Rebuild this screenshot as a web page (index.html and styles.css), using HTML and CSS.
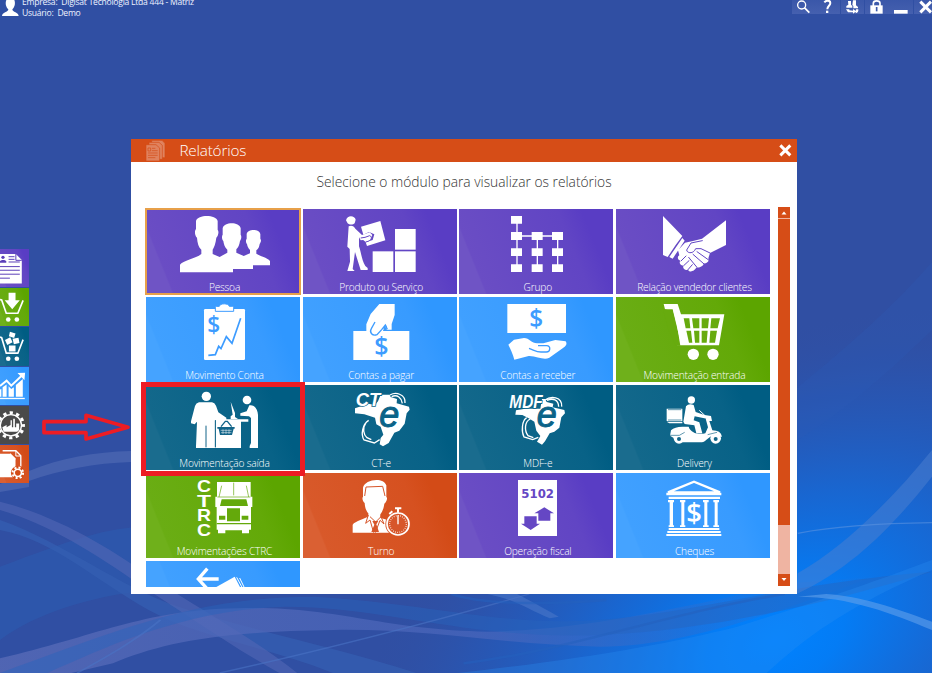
FILE: index.html
```html
<!DOCTYPE html>
<html lang="pt-BR">
<head>
<meta charset="utf-8">
<title>Relatórios</title>
<link rel="stylesheet" href="styles.css">
</head>
<body>
<svg class="wallpaper" viewBox="0 0 932 673" preserveAspectRatio="none">
  <defs>
    <radialGradient id="glow" gradientUnits="userSpaceOnUse" cx="0" cy="0" r="1" gradientTransform="translate(775 640) rotate(-28) scale(460 290)">
      <stop offset="0" stop-color="#0082ff"/><stop offset=".16" stop-color="#047cf5"/><stop offset=".45" stop-color="#156ad8" stop-opacity=".85"/><stop offset=".75" stop-color="#235bbd" stop-opacity=".5"/><stop offset="1" stop-color="#304fa3" stop-opacity="0"/>
    </radialGradient>
    <linearGradient id="fadeR" x1="0" x2="1"><stop offset="0" stop-color="#5a6cb8" stop-opacity=".75"/><stop offset=".55" stop-color="#4a66bb" stop-opacity=".7"/><stop offset="1" stop-color="#1a74df" stop-opacity=".2"/></linearGradient>
  </defs>
  <rect width="932" height="673" fill="#304fa3"/>
  <rect width="932" height="673" fill="url(#glow)"/>
  <path d="M29 471C60 458 95 452 131 451V462C95 463 60 470 29 481V487L0 492V484Z" fill="#4561ae"/>
  <path d="M797 388C850 345 900 300 932 262V330C885 375 840 415 797 440Z" fill="#2b5cb8" opacity=".25"/>
  <g transform="translate(0 480) scale(.5944 .3333)">
    <path d="M0 260C120 180 180 140 250 140V330C150 350 60 400 0 480Z" fill="#2b5cb0" opacity=".6"/>
    <path d="M0 120C110 190 200 320 300 380C420 450 560 500 700 579H560C450 500 330 470 250 390C160 300 90 180 0 150Z" fill="#3560b2" opacity=".7"/>
    <path d="M0 65C100 110 190 210 260 300C340 390 430 480 500 579H470C390 500 320 410 240 320C160 220 80 130 0 90Z" fill="#5066b3" opacity=".65"/>
    <path d="M0 535C160 470 240 390 400 385C560 375 640 450 820 455C980 450 1130 390 1330 310L1470 290C1330 380 1160 500 1010 500C850 495 720 445 560 450C360 455 270 490 190 550L120 579H0Z" fill="url(#fadeR)"/>
    <path d="M0 579C200 450 330 350 530 350C730 370 860 450 1040 415C1200 385 1330 310 1568 275C1390 370 1200 450 1010 465C790 480 650 380 480 380C310 390 180 500 80 579Z" fill="#2863bd" opacity=".45"/>
    <path d="M1340 342C1440 260 1510 120 1568 -10V-90C1500 60 1420 200 1342 280Z" fill="#4d7fd0" opacity=".5"/>
    <path d="M1290 579C1340 500 1400 400 1568 270V240C1480 300 1350 380 1240 440C1130 490 970 540 770 579Z" fill="#2c8df2" opacity=".3"/>
    <path d="M1342 350C1430 350 1500 400 1568 450V425C1500 380 1450 350 1390 342Z" fill="#60a0eb" opacity=".6"/>
    <path d="M1342 160C1400 140 1480 130 1568 128" fill="none" stroke="#5b93df" stroke-width="4" opacity=".6"/>
    <path d="M820 342C870 360 890 390 925 415L940 410C910 380 890 360 870 342Z" fill="#4a76c8" opacity=".6"/>
    <path d="M370 579C520 520 720 430 890 342M130 579C180 530 230 480 270 420" fill="none" stroke="#4973c4" stroke-width="4" opacity=".6"/>
    <path d="M780 550C960 510 1120 400 1320 342M760 342C820 380 960 370 1020 360" fill="none" stroke="#2460bd" stroke-width="7" opacity=".55"/>
  </g>
</svg>

<header class="topbar">
  <div class="account">
    <svg class="avatar" viewBox="0 0 60 50"><path fill="#fff" d="M19 0H43C47 10 44 22 37 28C37 36 56 38 56 48H6C6 38 25 36 25 28C18 22 15 10 19 0Z"/></svg>
    <div class="who"><p>Empresa:&nbsp; Digisat Tecnologia Ltda 444 - Matriz</p><p>Usuário:&nbsp; Demo</p></div>
  </div>
  <nav class="tools">
    <svg viewBox="36 0 71 42"><circle cx="65" cy="15" r="12" fill="none" stroke="#fff" stroke-width="4"/><path d="M73 23L88 38" stroke="#fff" stroke-width="5"/></svg>
    <svg viewBox="109 0 71 42"><path d="M134 7C140 0 152 0 152 9C152 17 143 18 143 28" fill="none" stroke="#fff" stroke-width="6"/><rect x="139" y="32" width="7" height="7" fill="#fff"/></svg>
    <svg viewBox="182 0 71 42"><path fill="#fff" d="M203 3H212V14L216 18V23H198V18L204 14ZM218 1H227V16L233 21V25H219V18L216 15ZM197 28H207V31L218 32V27L228 34L218 41V37H203ZM227 28H234C235 35 232 39 226 40Z"/></svg>
    <svg viewBox="255 0 71 42"><path d="M280 18V10C280 0 300 0 300 10V18" fill="none" stroke="#fff" stroke-width="5"/><path fill="#fff" d="M271 16H308V41H271Z"/><path d="M290 21V34" stroke="#3c58a9" stroke-width="5"/></svg>
    <svg viewBox="328 0 71 42"><rect x="343" y="30" width="41" height="11" fill="#fff"/></svg>
    <svg viewBox="401 0 55 42"><path d="M420 5L452 37M452 5L420 37" stroke="#fff" stroke-width="9"/></svg>
  </nav>
</header>

<aside class="dock">
  <a class="violet"><svg viewBox="0 27 89 115"><path fill="#fff" d="M0 42H48L66 60V131H0Z"/><path d="M48 42V61H66" fill="none" stroke="#5b3fb8" stroke-width="3"/><circle cx="9" cy="52" r="5" fill="#5b3fb8"/><path fill="#5b3fb8" d="M0 68V63L6 60H13L19 63V68Z"/><path d="M26 50H44M26 58H44M26 66H60M0 80H60M0 91H60M0 103H60M0 115H30" stroke="#5b3fb8" stroke-width="3"/></svg></a>
  <a class="green"><svg viewBox="0 145 89 115"><path d="M0 180L5 181L19 221H54L70 182" fill="none" stroke="#fff" stroke-width="5"/><path fill="#fff" d="M26 159H47V182H60L37 209L14 182H26Z"/><circle cx="25" cy="240" r="7" fill="#fff"/><circle cx="51" cy="240" r="7" fill="#fff"/></svg></a>
  <a class="teal"><svg viewBox="0 262 89 115"><path d="M0 292L5 294L19 341H54L70 300" fill="none" stroke="#fff" stroke-width="5"/><path fill="#fff" d="M30 276L47 281L43 295L27 290ZM15 301L31 293L38 308L22 316ZM38 297L56 294L59 310L42 314ZM27 318H47V336H27Z"/><circle cx="25" cy="358" r="7" fill="#fff"/><circle cx="51" cy="358" r="7" fill="#fff"/></svg></a>
  <a class="blue"><svg viewBox="0 380 89 115"><path d="M0 437L20 421L34 436L68 404" fill="none" stroke="#fff" stroke-width="6"/><path fill="#fff" d="M53 398L76 397L74 420ZM0 448L4 446V470H0ZM8 441L20 433V470H8ZM26 438L34 446L42 441V470H26ZM48 434L69 416V470H48Z"/><path d="M0 475H75" stroke="#fff" stroke-width="4"/></svg></a>
  <a class="gray"><svg viewBox="0 497 89 115"><circle cx="33" cy="555" r="32" fill="none" stroke="#fff" stroke-width="4"/><circle cx="33" cy="555" r="38" fill="none" stroke="#fff" stroke-width="9" stroke-dasharray="10 9.9" stroke-dashoffset="5"/><path fill="#fff" d="M7 561L20 554V561L32 554V540H36V561H40V535H45V561H49V550H58V569L52 575H11Z"/></svg></a>
  <a class="orange"><svg viewBox="0 615 89 115"><path fill="#fff" d="M0 641H33L47 655V712H0Z"/><path d="M8 632H48L63 647V680" fill="none" stroke="#fff" stroke-width="4"/><path d="M32 641V657H47M48 632V648H63" fill="none" stroke="#fff" stroke-width="3"/><circle cx="54" cy="699" r="21" fill="#d34b15"/><circle cx="54" cy="699" r="11" fill="none" stroke="#fff" stroke-width="5"/><circle cx="54" cy="699" r="16" fill="none" stroke="#fff" stroke-width="6" stroke-dasharray="6.3 6.27"/></svg></a>
</aside>

<svg class="arrow" viewBox="120 510 275 100"><path d="M132 545H258V526L384 562L258 597V578H132Z" fill="none" stroke="#ed1c24" stroke-width="11" stroke-linejoin="round"/></svg>

<main class="dialog">
  <div class="titlebar">
    <svg class="report-icon" viewBox="45 10 62 70"><g fill="#e0825e" stroke="#d34b15" stroke-width="2"><path d="M65 14H96L105 23V66H65Z"/><path d="M57 20H87L97 29V71H57Z"/><path d="M48 27H78L89 37V76H48Z"/></g><path d="M54 37H62V46H54ZM66 38H76M66 45H83M54 52H83M54 59H83M54 66H76" fill="none" stroke="#d34b15" stroke-width="2"/></svg>
    <h1>Relatórios</h1>
    <svg class="close" viewBox="970 24 44 44"><path d="M977 31L1007 61M1007 31L977 61" stroke="#fff" stroke-width="9"/></svg>
  </div>
  <h2>Selecione o módulo para visualizar os relatórios</h2>
  <div class="content">
    <div class="grid">
      <div class="tile violet focused"><svg viewBox="48 222 462 210"><path fill="#fff" d="M198 258C203 238 258 238 263 258V284C268 290 264 304 259 308C257 325 252 338 248 344V357L269 366L292 353V344C284 338 281 325 280 318C275 313 275 303 278 299V280C282 260 328 260 332 280V299C336 305 333 314 330 318C328 330 325 337 319 343V353L341 363L360 355V345C354 340 352 332 351 327C347 323 347 314 350 311V297C353 281 388 281 391 297V311C395 316 392 323 389 327C387 338 385 341 379 346V356C398 367 417 370 420 379V391H369V402H309V412H150V389C158 377 197 371 214 357V344C206 337 202 324 201 308C194 302 193 288 198 282Z"/></svg><span>Pessoa</span></div>
      <div class="tile violet"><svg viewBox="519 222 462 210"><g fill="#fff"><path d="M648 256C652 238 675 242 677 254L674 265C668 271 654 269 652 263ZM656 274C665 270 672 274 676 281L696 300L719 292L727 300L721 313L692 316L687 307V334C693 351 695 375 706 393L713 399V405H692L675 351L668 402L674 408H652L660 380L659 342L652 335Z"/><path d="M693 275L751 258L766 316L711 333L707 322L728 315L733 298L717 291L700 299Z"/><rect x="795" y="282" width="62" height="62"/><rect x="728" y="349" width="62" height="62"/><rect x="795" y="349" width="62" height="62"/></g><path d="M692 309L705 307L719 302C729 306 724 318 707 321" fill="#fff" stroke="#6547c4" stroke-width="3"/></svg><span>Produto ou Serviço</span></div>
      <div class="tile violet"><svg viewBox="15 222 462 210"><path d="M189 255V400M189 303H311V400M250 303V400" fill="none" stroke="#fff" stroke-width="4"/><path fill="#fff" d="M171 243h33v23h-33zM171 291h33v24h-33zM171 340h33v23h-33zM171 388h33v23h-33zM233 291h33v24h-33zM233 340h33v23h-33zM233 388h33v23h-33zM294 291h33v24h-33zM294 340h33v23h-33zM294 388h33v23h-33z"/></svg><span>Grupo</span></div>
      <div class="tile violet"><svg viewBox="485 222 462 210"><path fill="#fff" d="M626 243L684 303L664 330L640 366L626 360ZM684 309L691 317L655 371L645 366ZM815 256V330L767 354L762 370C767 379 755 387 748 385C748 394 733 400 727 397C718 412 704 412 701 404C692 408 684 399 687 392C676 391 674 382 678 377C668 374 669 364 675 361L671 346L692 323L719 317L743 311Z"/><path d="M767 354L740 341H724C717 358 698 355 697 345L710 324L744 317M728 350L763 375M716 358L748 386M703 367L727 396M680 378L695 363M688 392L704 377M701 404L714 389" fill="none" stroke="#6044c4" stroke-width="3" stroke-linecap="round" stroke-linejoin="round"/></svg><span>Relação vendedor clientes</span></div>

      <div class="tile blue"><svg viewBox="18 6 462 210"><rect x="192" y="42" width="123" height="153" rx="4" fill="#fff"/><path d="M226 49V37Q226 33 238 34C239 24 266 24 268 34Q280 32 281 37V49Z" fill="#fff" stroke="#3d9cff" stroke-width="3"/><text x="202" y="113" class="dollar" font-size="68" fill="#3d9cff">$</text><path d="M205 181L226 179L236 154L243 161L259 125L276 145L302 70" fill="none" stroke="#3d9cff" stroke-width="5"/></svg><span>Movimento Conta</span></div>
      <div class="tile blue"><svg viewBox="489 6 462 210"><path fill="#fff" d="M718 27H764V60L755 87V104H740V91L729 107L717 120C706 127 692 121 693 109H679V88L692 57Z"/><rect x="640" y="108" width="168" height="87" fill="#fff"/><path d="M694 101L705 81M694 101C687 113 697 124 711 119L725 104L736 90L742 103M733 95V107" fill="none" stroke="#3d9cff" stroke-width="4"/><text x="703" y="181" class="dollar" font-size="75" fill="#3d9cff">$</text></svg><span>Contas a pagar</span></div>
      <div class="tile blue"><svg viewBox="15 6 462 210"><rect x="160" y="27" width="176" height="87" fill="#fff"/><text x="226" y="95" class="dollar" font-size="73" fill="#3d9cff">$</text><path fill="#fff" d="M163 149L180 134L210 129C226 129 233 145 249 145H268L304 135L335 139Q343 150 326 160L286 188C269 198 249 182 224 183L181 194C177 179 169 160 163 149Z"/><path d="M225 160C240 165 246 171 261 171H277C290 171 291 153 278 152L252 152" fill="none" stroke="#3d9cff" stroke-width="4"/></svg><span>Contas a receber</span></div>
      <div class="tile green"><svg viewBox="485 6 462 210"><path fill="#fff" d="M628 27H670L680 58H810L794 151H668L640 45L632 43Z"/><path fill="#67ab0e" d="M688 70H705L708 100H694ZM713 70H735V100H717ZM742 70H764L761 100H742ZM771 70H797L790 100H768ZM696 107H710L714 143H704ZM719 107H735V143H722ZM742 107H760L757 143H742ZM768 107H788L782 143H765Z"/><path fill="#67ab0e" d="M626 43H656L668 90L678 152H664L640 100Z"/><path d="M660 40L686 147" stroke="#fff" stroke-width="11"/><circle cx="717" cy="178" r="17" fill="#fff"/><circle cx="776" cy="178" r="17" fill="#fff"/></svg><span>Movimentação entrada</span></div>

      <div class="tile teal marked"><svg viewBox="48 21 462 210"><g fill="#fff"><circle cx="229" cy="55" r="14"/><circle cx="351" cy="66" r="13"/><path d="M207 73H246Q254 74 258 83L265 103L289 119V126H255V207L260 210H198V204L201 131L194 139L183 136V130L195 84Q198 75 207 73ZM257 124H355V131H333V210H257ZM302 71L315 105V117L324 123H302V115L308 110ZM331 113V106L350 100L358 82C372 79 383 92 384 111V210H359V204L363 195V120L357 115Z"/></g><path d="M228 143V208M256 127V208" stroke="#136589" stroke-width="3"/><path d="M262 147H314V152H311L306 171H270L266 152H262Z" fill="#136589"/><path d="M273 146L286 130H292L305 146" fill="none" stroke="#136589" stroke-width="4"/><path d="M272 157H305M273 164H304M279 154V168M288 154V168M297 154V168" fill="none" stroke="#fff" stroke-width="1.5"/></svg><span>Movimentação saída</span></div>
      <div class="tile teal"><svg viewBox="519 21 462 210"><path fill="#fff" d="M752 50H779L782 57L801 63L800 76L837 86L839 95L830 106L824 137L808 158L793 164L776 195L759 205L749 199L752 180L760 170L752 146L739 139L735 119L703 109L675 106V91L693 85L701 74L734 81L744 70Z"/><path d="M716 127C697 139 692 170 702 186L733 195L749 185M707 136C697 149 700 170 711 179L724 185M780 51C799 40 827 50 825 75M785 56C802 48 815 60 817 76" fill="none" stroke="#fff" stroke-width="4"/><text x="677" y="85" class="brand" font-size="55">CT</text><text x="748" y="147" class="letter-e" font-size="108">e</text></svg><span>CT-e</span></div>
      <div class="tile teal"><svg viewBox="15 9 462 210"><path fill="#fff" d="M264 51H273L278 60L298 65L296 76L331 84L333 94L322 106L316 137L301 149L287 154L273 178L264 188L249 179L259 162L247 146L241 119L224 109L205 99L184 98L186 85L214 80H259Z"/><path d="M218 107C203 116 202 149 210 165L236 173L253 166M229 111C211 119 211 146 222 161L238 167M273 54C290 42 325 43 323 74M279 55C297 48 313 52 314 74" fill="none" stroke="#fff" stroke-width="4"/><text x="166" y="77" class="brand" font-size="53" textLength="100" lengthAdjust="spacingAndGlyphs">MDF</text><text x="248" y="136" class="letter-e" font-size="108">e</text></svg><span>MDF-e</span></div>
      <div class="tile teal"><svg viewBox="485 9 462 210"><g fill="#fff"><circle cx="711" cy="54" r="11"/><path d="M637 80H684V117H637ZM637 119H684V124H645ZM695 73Q703 63 718 69L724 90L761 103L757 110L721 103L718 115L735 121L744 154H726L720 130L691 126L687 119ZM751 99L770 102L773 117H765L774 145Q799 145 803 164L771 162C753 174 752 181 738 181H679L647 161L650 145Q662 133 688 134H703C708 152 731 159 753 154L761 136Z"/><circle cx="674" cy="169" r="16"/><circle cx="784" cy="169" r="16"/></g><path d="M641 83H681M641 114H681" stroke="#116588" stroke-width="2"/><circle cx="674" cy="171" r="6" fill="#116588"/><circle cx="784" cy="171" r="6" fill="#116588"/><path d="M752 101L735 85" stroke="#fff" stroke-width="3"/><path d="M647 160H675L691 151M760 158L788 151" fill="none" stroke="#116588" stroke-width="2"/></svg><span>Delivery</span></div>

      <div class="tile green"><svg viewBox="48 9 462 210"><g class="ctrc"><text x="201" y="67" textLength="42" lengthAdjust="spacingAndGlyphs">C</text><text x="201" y="111" textLength="42" lengthAdjust="spacingAndGlyphs">T</text><text x="201" y="154" textLength="42" lengthAdjust="spacingAndGlyphs">R</text><text x="201" y="197" textLength="42" lengthAdjust="spacingAndGlyphs">C</text></g><path fill="#fff" d="M261 36H362V80H367V111H363V179H357V190H336V181H286V190H264V179H260V111H256V80H261Z"/><g fill="#64a90b"><path d="M275 88H349L354 108H270ZM291 115H330V154H291ZM267 137H286V149H267ZM335 137H355V149H335ZM260 159H363V163H260Z"/><path d="M311 38V76M262 81H361M267 81L275 47M356 81L349 47" stroke="#64a90b" stroke-width="2"/></g></svg><span>Movimentações CTRC</span></div>
      <div class="tile orange"><svg viewBox="519 9 462 210"><path fill="#fff" d="M699 53C704 27 761 20 769 46V81C774 84 769 97 763 101C761 116 757 125 751 133V143C765 150 788 149 800 163V188H668V164C675 154 707 146 715 139V130C708 122 705 113 704 99C697 93 696 84 699 80Z"/><path d="M704 78L708 51L758 49L765 78M715 135L707 160L720 150L731 188M752 137L762 162L750 151L736 188M720 140L737 156L752 141" fill="none" stroke="#d7562a" stroke-width="3"/><path fill="#d7562a" d="M727 153H745L739 163L747 186H724L733 164Z"/><circle cx="804" cy="162" r="38" fill="#d7562a"/><circle cx="804" cy="162" r="33" fill="none" stroke="#fff" stroke-width="5"/><circle cx="804" cy="162" r="25" fill="none" stroke="#fff" stroke-width="4" stroke-dasharray="2 4.5"/><path d="M804 117V128M795 115H814M778 132L787 124" stroke="#fff" stroke-width="6"/><path d="M804 136V163" stroke="#fff" stroke-width="4"/></svg><span>Turno</span></div>
      <div class="tile violet"><svg viewBox="15 9 462 210"><rect x="192" y="30" width="117" height="168" fill="#fff"/><text x="202" y="84" class="code" textLength="98" lengthAdjust="spacingAndGlyphs">5102</text><path fill="#6547c4" d="M271 112L300 130H289V152H253V130H241ZM211 139H248V161H258L230 180L201 161H211Z"/></svg><span>Operação fiscal</span></div>
      <div class="tile blue"><svg viewBox="485 9 462 210"><path d="M641 67L719 35L797 67Z" fill="none" stroke="#fff" stroke-width="7"/><path fill="#fff" d="M636 68H801V76H636ZM643 80H797V87H643ZM641 90h18v7h-3v69h3v5h-16v-5h3V97h-5zM677 90h16v7h-3v69h3v5h-16v-5h4V97h-4zM746 90h17v7h-4v69h4v5h-17v-5h4V97h-4zM777 90h17v7h-4v69h4v5h-17v-5h4V97h-4zM643 174H795V180H643ZM639 183H799V189H639ZM636 192H801V198H636Z"/><text x="696" y="160" class="dollar" font-size="82" fill="#fff">$</text></svg><span>Cheques</span></div>

      <div class="tile blue"><svg viewBox="48 273 462 210"><path d="M266 327H207M232 296L205 327L232 357" fill="none" stroke="#fff" stroke-width="10"/><path fill="#fff" d="M259 351L314 320L332 355L260 357Z"/><path d="M320 322L336 352M329 324L342 351" stroke="#fff" stroke-width="3"/></svg></div>
    </div>
    <div class="scrollbar"><b><svg viewBox="0 0 12 11"><path fill="#fff" d="M3.5 7.5H8.5L6 4.5Z"/></svg></b><i></i><u></u><b><svg viewBox="0 0 12 11"><path fill="#fff" d="M3.5 4H8.5L6 7Z"/></svg></b></div>
  </div>
</main>
</body>
</html>
```

FILE: styles.css
```css
* { box-sizing: border-box; }
body {
  margin: 0;
  width: 932px;
  height: 673px;
  overflow: hidden;
  position: relative;
  background: #304fa3;
  font-family: "Open Sans", "Noto Sans", sans-serif;
}
svg { display: block; }
p, h1, h2 { margin: 0; font-weight: 300; }

.wallpaper { position: absolute; inset: 0; width: 932px; height: 673px; z-index: -1; }

.topbar { display: flex; justify-content: space-between; height: 20px; }
.account { display: flex; gap: 2px; }
.avatar { width: 20px; height: 16.67px; }
.who { margin-top: -3px; font-size: 8.6px; line-height: 11px; color: #eef2ff; white-space: nowrap; }
.who p { font-weight: 400; letter-spacing: -.26px; }
.tools { display: flex; gap: .67px; height: 14px; }
.tools svg { width: 23.67px; height: 14px; background: linear-gradient(#3a57a9, #4560af); }
.tools svg:last-child { width: 18.33px; }

.dock {
  position: absolute;
  left: 0;
  top: 249px;
  width: 29.4px;
  display: flex;
  flex-direction: column;
  gap: 1px;
}
.dock a { height: 38.2px; }
.dock svg { width: 29.4px; height: 38.2px; }
.arrow { position: absolute; left: 40px; top: 410px; width: 91.67px; height: 33.33px; z-index: 2; }

.dialog {
  width: 666.5px;
  height: 455.8px;
  margin: 118.6px 0 0 130.8px;
  background: #fff;
}
.titlebar {
  display: flex;
  align-items: center;
  height: 23.4px;
  padding: 0 4.5px 0 14.5px;
  background: #d64d17;
}
.report-icon { width: 20.67px; height: 23.33px; }
.titlebar h1 { margin: 0 auto 0 13.5px; color: #fff; font-size: 15.3px; line-height: 22px; letter-spacing: -.2px; }
.close { width: 14.67px; height: 14.67px; }
.dialog h2 { height: 45px; padding-top: 10px; text-align: center; font-size: 13.8px; line-height: 20px; color: #333; }

.content { display: flex; gap: 8px; height: 379px; padding-left: 15.2px; }
.grid {
  width: 624px;
  height: 379px;
  padding-top: 2px;
  display: grid;
  grid-template-columns: repeat(4, 154px);
  grid-auto-rows: 85px;
  column-gap: 2.67px;
  row-gap: 3px;
}
.tile { position: relative; height: 85px; }
.tile svg { width: 154px; height: 70px; }
.tile span {
  display: block;
  height: 15px;
  padding-left: 3px;
  line-height: 17px;
  text-align: center;
  color: #fff;
  font-size: 10.2px;
  font-weight: 300;
  letter-spacing: -.2px;
  white-space: nowrap;
}
.tile:last-child { height: 26px; overflow: hidden; }
.focused { outline: 2px solid #e7a04a; outline-offset: -1px; }
.marked::after { content: ""; position: absolute; inset: -3px -5px -6px; border: 5px solid #ed1c24; z-index: 1; }
.marked { z-index: 1; }

.violet { background: linear-gradient(68deg, #6f54c5 0 14%, #6a4dc4 15%, #6145c4 70%, #593dc4 83%); }
.blue { background: linear-gradient(68deg, #45a3ff 0 14%, #40a0ff 15%, #389bff 70%, #2f97ff 83%); }
.green { background: linear-gradient(68deg, #6fb01b 0 14%, #6aad14 15%, #63a908 70%, #5ca500 83%); }
.teal { background: linear-gradient(68deg, #1a6c8e 0 14%, #13688b 15%, #086287 70%, #005d83 83%); }
.orange { background: linear-gradient(68deg, #da6033 0 14%, #d8592a 15%, #d65120 70%, #d34b17 83%); }
.gray { background: #4a4a4a; }

.dollar { font-family: "Open Sans", sans-serif; font-weight: 600; }
.brand { font-family: "Liberation Sans", sans-serif; font-weight: 700; font-style: italic; fill: #fff; stroke: #0e658a; stroke-width: 5; paint-order: stroke; }
.letter-e { font-family: "Liberation Sans", sans-serif; font-style: italic; fill: #0a6388; stroke: #0a6388; stroke-width: 3; }
.ctrc text { font-family: "Liberation Sans", sans-serif; font-weight: 700; font-size: 50px; fill: #fff; }
.code { font-family: "DejaVu Sans", sans-serif; font-weight: 700; font-size: 35px; fill: #6547c4; }

.scrollbar { display: flex; flex-direction: column; width: 12px; height: 379px; background: #efb4a2; }
.scrollbar b { height: 11.5px; background: #d64d17; }
.scrollbar i { height: 305.5px; margin-top: .8px; background: #d64d17; }
.scrollbar u { flex: 1; }
```
